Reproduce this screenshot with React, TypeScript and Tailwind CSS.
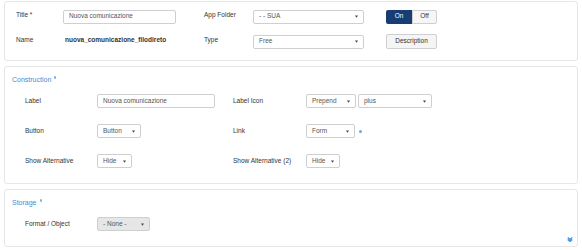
import React from 'react';

// Small native-looking select box with a tiny caret
function Select({ value, width, disabled }: { value: string; width: string; disabled?: boolean }) {
  return (
    <div
      className={`${width} h-[14px] flex items-center justify-between pl-[5px] pr-[5px] border border-[#cfcfcf] rounded-[2px] text-[#555] ${
        disabled ? 'bg-[#e6e6e6]' : 'bg-white'
      }`}
    >
      <span>{value}</span>
      <svg width="3" height="3" viewBox="0 0 4 3">
        <path d="M0 0h4L2 3z" fill="#444" />
      </svg>
    </div>
  );
}

function Input({ value, width }: { value: string; width: string }) {
  return (
    <div className={`${width} h-[14px] flex items-center pl-[5px] border border-[#cfcfcf] rounded-[2px] bg-white text-[#555]`}>
      {value}
    </div>
  );
}

function Dot() {
  return <span className="inline-block w-[3px] h-[3px] rounded-full bg-[#6aa8ee]" />;
}

function Heading({ text }: { text: string }) {
  return (
    <div className="h-[9px] flex items-center text-[7px] text-[#3f8ad8]">
      {text}
      <span className="ml-[3px] -mt-[5px] inline-block w-[2px] h-[3px] rounded-[1px] bg-[#7fb3ee]" />
    </div>
  );
}

export default function App() {
  return (
    <div
      className="w-[582px] h-[250px] bg-white pt-[1px] px-[4px] text-[6.5px] leading-none text-[#333] overflow-hidden"
      style={{ fontFamily: '"Liberation Sans", Arial, sans-serif' }}
    >
      {/* Main details */}
      <div className="h-[60px] border border-[#e6e6e6] rounded-[3px] pt-[7px] pl-[11px] flex flex-col gap-[10px]">
        <div className="h-[15px] flex items-center">
          <div className="w-[47px] -mt-[2px]">Title *</div>
          <div className="w-[141px]">
            <Input value="Nuova comunicazione" width="w-[113px]" />
          </div>
          <div className="w-[49px] -mt-[2px]">App Folder</div>
          <div className="w-[133px]">
            <Select value="- - SUA" width="w-[111px]" />
          </div>
          <div className="flex h-[14px]">
            <div className="w-[26px] flex items-center justify-center bg-[#173d73] text-white rounded-l-[2px]">On</div>
            <div className="w-[25px] flex items-center justify-center bg-[#f6f6f6] border border-[#cfcfcf] rounded-r-[2px]">
              Off
            </div>
          </div>
        </div>
        <div className="h-[15px] flex items-center">
          <div className="w-[49px] -mt-[2px]">Name</div>
          <div className="w-[139px] font-bold -mt-[2px]">nuova_comunicazione_filodireto</div>
          <div className="w-[49px] -mt-[2px]">Type</div>
          <div className="w-[133px]">
            <Select value="Free" width="w-[111px]" />
          </div>
          <div className="w-[51px] h-[15px] flex items-center justify-center bg-[#f5f5f5] border border-[#cfcfcf] rounded-[2px]">
            Description
          </div>
        </div>
      </div>

      {/* Construction */}
      <div className="mt-[5px] h-[118px] border border-[#e6e6e6] rounded-[3px] pt-[8px] pl-[7px]">
        <Heading text="Construction" />
        <div className="mt-[10px] pl-[13px] flex flex-col gap-[16px]">
          <div className="h-[14px] flex items-center">
            <div className="w-[72px]">Label</div>
            <div className="w-[136px]">
              <Input value="Nuova comunicazione" width="w-[118px]" />
            </div>
            <div className="w-[73px]">Label Icon</div>
            <div className="flex gap-[2px]">
              <Select value="Prepend" width="w-[50px]" />
              <Select value="plus" width="w-[74px]" />
            </div>
          </div>
          <div className="h-[14px] flex items-center">
            <div className="w-[72px]">Button</div>
            <div className="w-[136px]">
              <Select value="Button" width="w-[44px]" />
            </div>
            <div className="w-[73px]">Link</div>
            <div className="flex items-center gap-[4px]">
              <Select value="Form" width="w-[49px]" />
              <Dot />
            </div>
          </div>
          <div className="h-[14px] flex items-center">
            <div className="w-[72px]">Show Alternative</div>
            <div className="w-[136px]">
              <Select value="Hide" width="w-[35px]" />
            </div>
            <div className="w-[73px]">Show Alternative (2)</div>
            <Select value="Hide" width="w-[34px]" />
          </div>
        </div>
      </div>

      {/* Storage */}
      <div className="relative mt-[5px] h-[58px] border border-[#e6e6e6] rounded-[3px] pt-[8px] pl-[7px]">
        <Heading text="Storage" />
        <div className="mt-[10px] pl-[13px]">
          <div className="h-[14px] flex items-center">
            <div className="w-[72px]">Format / Object</div>
            <Select value="- None -" width="w-[53px]" disabled />
          </div>
        </div>
        <svg className="absolute right-[4px] bottom-[4px]" width="6" height="5" viewBox="0 0 6 5">
          <path d="M0.7 0.5l2.3 2 2.3-2M0.7 2.5l2.3 2 2.3-2" stroke="#4a96ee" strokeWidth="1.4" fill="none" />
        </svg>
      </div>
    </div>
  );
}
